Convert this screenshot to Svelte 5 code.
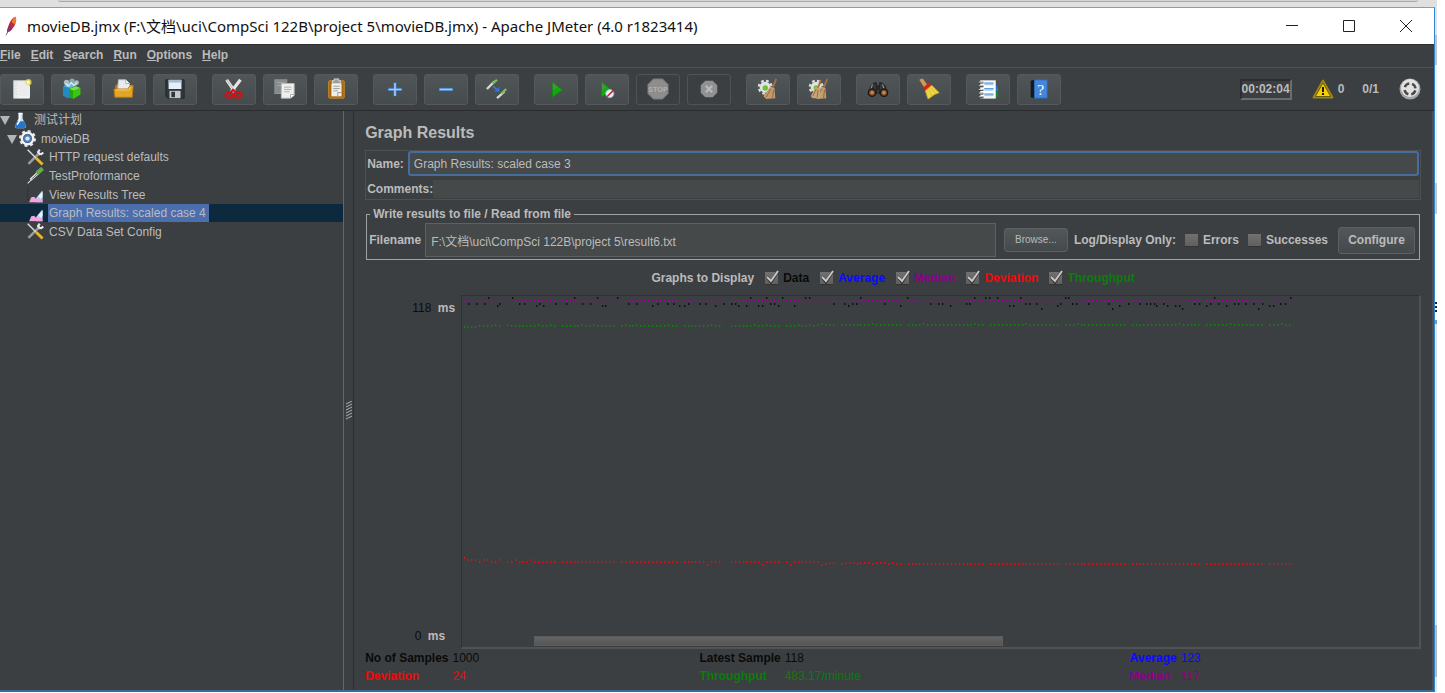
<script>
  const menus = ['File', 'Edit', 'Search', 'Run', 'Options', 'Help'];

  const toolGroups = [
    ['new', 'templates', 'open', 'save'],
    ['cut', 'copy', 'paste'],
    ['expand', 'collapse', 'toggle'],
    ['start', 'startNoPause', 'stop', 'shutdown'],
    ['clear', 'clearAll'],
    ['find', 'resetFind'],
    ['functions', 'help'],
  ];
  const disabledTools = ['stop', 'shutdown'];

  const tree = [
    { label: '测试计划', icon: 'plan', level: 0, open: true },
    { label: 'movieDB', icon: 'gear', level: 1, open: true },
    { label: 'HTTP request defaults', icon: 'config', level: 2 },
    { label: 'TestProformance', icon: 'sampler', level: 2 },
    { label: 'View Results Tree', icon: 'listener', level: 2 },
    { label: 'Graph Results: scaled case 4', icon: 'listener', level: 2, selected: true },
    { label: 'CSV Data Set Config', icon: 'config', level: 2 },
  ];

  const series = [
    { name: 'Data', color: '#0a0a0a' },
    { name: 'Average', color: '#0a0aff' },
    { name: 'Median', color: '#8b008b' },
    { name: 'Deviation', color: '#ee0a0a' },
    { name: 'Throughput', color: '#0a7d0a' },
  ];

  const stats = [
    [['No of Samples', '1000', '#0a0a0a'], ['Deviation', '24', '#ee0a0a']],
    [['Latest Sample', '118', '#0a0a0a'], ['Throughput', '483.17/minute', '#0a7d0a']],
    [['Average', '123', '#0a0aff'], ['Median', '117', '#8b008b']],
  ];

  // Sample points, grouped by the height at which they are plotted
  const data = [
    { y: 1, xs: [25, 49, 111, 134, 154, 287, 303, 319, 342, 346, 397, 444, 511, 522, 526, 534, 557, 602, 605, 751, 827] },
    { y: 7, xs: [5, 13, 21, 36, 56, 61, 76, 92, 103, 119, 127, 165, 173, 194, 204, 210, 225, 236, 242, 260, 268, 272, 307, 311, 370, 381, 389, 393, 421, 467, 475, 479, 503, 506, 562, 566, 573, 597, 609, 613, 625, 645, 665, 676, 683, 687, 691, 700, 731, 736, 747, 755, 771, 775, 782, 790, 799, 817, 822] },
    { y: 9, xs: [34, 73, 80, 139, 142, 189, 216, 221, 252, 275, 283, 295, 299, 315, 331, 385, 437, 487, 546, 550, 594, 656, 693, 704, 712, 716, 743, 763, 806, 810] },
    { y: 12, xs: [578, 649, 719, 795] },
  ];
  const skipped = [10, 24, 39, 55, 66, 67, 81, 95, 112, 133, 152, 169, 188, 204];
  const steps = Array.from({ length: 211 }, (_, i) => i).filter((i) => !skipped.includes(i));
  const xAt = (i) => 2 + Math.floor(i * 3.93);
  const throughputY = (i) => (i < 4 ? 30 : i < 90 ? ((i * 7) % 11 < 2 ? 28 : 29) : (i * 5) % 13 === 0 ? 27 : 28);
  const deviationStart = [263, 265, 265, 265, 267, 265, 265, 267, 267, 265, 267, 267, 267, 265, 267, 267, 267, 265];
  const deviationY = (i) => {
    if (i < deviationStart.length) return deviationStart[i];
    if ([62, 66, 76, 83, 91, 95].includes(i)) return 270;
    return i < 92 ? 267 : i < 110 ? 268 + (i % 4 === 0 ? 1 : 0) : 269;
  };
</script>

{#snippet icon(name)}
  <svg class="icon" viewBox="0 0 24 24" aria-hidden="true">
    {#if name === 'new'}
      <rect x="3" y="3" width="17" height="19" fill="#ececec" stroke="#d0d0d0" />
      <path d="M5.500 5v15" stroke="#bbb" stroke-dasharray="1 2" />
      <path d="M7 21h13V9" fill="none" stroke="#fff" />
      <circle cx="19" cy="4.500" r="3.500" fill="#e9dc54" opacity=".75" /><circle cx="19" cy="4.500" r="1.700" fill="#fffbc0" />
    {:else if name === 'templates'}
      <path d="M1 10l9-3v14l-4 1-5-3z" fill="#238bc4" /><path d="M1 9l9-4 8 2-8 4z" fill="#58bde8" />
      <circle cx="5" cy="5" r="3" fill="#aebdc3" /><circle cx="11" cy="3.500" r="3" fill="#8fa3ab" /><circle cx="16" cy="5" r="2.500" fill="#a8bac2" />
      <path d="M4 6l3 3 3-4 3 3 3-3" fill="none" stroke="#dbe8ec" stroke-width="1.500" />
      <path d="M8 12l7-3 5 2v7l-8 5-4-2z" fill="#27a30c" /><path d="M8 12l7-3 5 2-7 3z" fill="#7be33f" /><path d="M12 14l8-3v7l-8 5z" fill="#39c713" />
    {:else if name === 'open'}
      <path d="M2 9l3-3h4l2 2h8v12H3z" fill="#b87a10" /><path d="M6 2h8l4 4v9H5z" fill="#e9ebee" stroke="#bfc4c9" /><path d="M14 2v4h4" fill="#fff" stroke="#aaa" />
      <path d="M1 12h15l3-4h3l-1 13H2z" fill="#e3a527" stroke="#b77a0b" /><path d="M3 13h14l2-3" fill="none" stroke="#ffd66c" />
    {:else if name === 'save'}
      <path d="M2 2h20v20H4l-2-2z" fill="#30363b" stroke="#20262a" /><rect x="5" y="2" width="14" height="10" fill="#e3f0f9" /><rect x="5" y="2" width="14" height="3" fill="#a5bccd" />
      <rect x="6" y="14" width="12" height="8" fill="#c4c8cb" /><rect x="8" y="15" width="4" height="6" fill="#30363b" />
    {:else if name === 'cut'}
      <path d="M4 2l9 13M19 2L9 15" stroke="#e5e5e5" stroke-width="3.500" /><path d="M4 2l9 13" stroke="#b7b7b7" />
      <ellipse cx="6.500" cy="18.500" rx="3.500" ry="3" fill="none" stroke="#d80f12" stroke-width="2.500" /><ellipse cx="16.500" cy="18.500" rx="3.500" ry="3" fill="none" stroke="#d80f12" stroke-width="2.500" />
      <path d="M8 16l3-3 4 3" fill="none" stroke="#d80f12" stroke-width="2.500" />
    {:else if name === 'copy'}
      <rect x="1" y="2" width="13" height="15" fill="#858a8c" stroke="#969a9c" /><path d="M3 5h9M3 8h6" stroke="#a6a9aa" />
      <path d="M8 6h14v13l-4 3H8z" fill="#eeeeea" stroke="#b9bab6" /><path d="M11 10h8M11 12.500h8M11 15h6" stroke="#aaa" /><path d="M18 22v-4h4" fill="#fff" stroke="#aaa" />
    {:else if name === 'paste'}
      <rect x="4" y="3" width="17" height="19" rx="1" fill="#a86812" stroke="#cf8a22" /><rect x="7" y="6" width="11" height="14" fill="#eeeeea" />
      <path d="M8 3h2V1h5v2h2v3H8z" fill="#9b9e9e" stroke="#dcdddd" /><path d="M9 9h7M9 11.500h7M9 14h5" stroke="#999" /><path d="M14 20v-4h4" fill="#fff" stroke="#888" />
    {:else if name === 'expand'}
      <path d="M12 5v15M4.500 12.500h15" stroke="#3a78bd" stroke-width="3.500" /><path d="M12 5.500v14M5 12.500h14" stroke="#a4c9ef" stroke-width="1.800" />
    {:else if name === 'collapse'}
      <path d="M4.500 12.500h15" stroke="#3a78bd" stroke-width="3.500" /><path d="M5 12.500h14" stroke="#a4c9ef" stroke-width="1.800" />
    {:else if name === 'toggle'}
      <path d="M1 12l8-8" stroke="#d9d9d6" stroke-width="2.500" /><path d="M7 6l5-4" stroke="#7fbd52" stroke-width="2.500" />
      <path d="M12 22l8-7" stroke="#d9d9d6" stroke-width="2.500" /><path d="M17 17l5-5" stroke="#7fbd52" stroke-width="2.500" />
      <path d="M8 9l4 4" stroke="#3880df" stroke-width="1.500" /><path d="M14.500 9.500v5.500H9z" fill="#2876e0" />
    {:else if name === 'start' || name === 'startNoPause'}
      <path d={name === 'start' ? 'M8 4l11 9-11 8z' : 'M6 4l11 9-11 8z'} fill="#12a90f" stroke="#168215" /><path d={name === 'start' ? 'M8.500 5l5 5-5 3z' : 'M6.500 5l5 5-5 3z'} fill="#4f8e4b" />
      {#if name === 'startNoPause'}
        <circle cx="15" cy="17" r="4.500" fill="#e6edf7" stroke="#7db0e0" /><path d="M12 20.500l7-7" stroke="#d0202a" stroke-width="1.600" />
      {/if}
    {:else if name === 'stop'}
      <path d="M7 1h10l6 6v10l-6 6H7l-6-6V7z" fill="#8d8d8d" stroke="#777" />
      <text x="12" y="15" text-anchor="middle" fill="#b0b0b0" font-size="8" font-weight="700">STOP</text>
    {:else if name === 'shutdown'}
      <path d="M8 3h8l5 5v8l-5 5H8l-5-5V8z" fill="#919191" /><path d="M8.500 8.500l7 7M15.500 8.500l-7 7" stroke="#bababa" stroke-width="2.500" />
    {:else if name === 'clear' || name === 'clearAll'}
      <circle cx="9" cy="10" r="6" fill="#e2e3e1" /><circle cx="9" cy="10" r="7" fill="none" stroke="#d9dcda" stroke-width="2.500" stroke-dasharray="3 2.500" />
      <circle cx="9" cy="11" r="3" fill="#69c636" />
      <path d="M21 1l-4 10" stroke="#a27142" stroke-width="2" /><path d="M14 10l5 1 1 11-10 1-3-3z" fill="#c39a6c" /><path d="M15 12l-5 9M18 13l-1 9" stroke="#8f683f" />
      {#if name === 'clearAll'}
        <path d="M14 2l-3 9" stroke="#a27142" stroke-width="2" /><path d="M8 10l5 1 1 11-9 0-2-2z" fill="#c9a478" /><path d="M9 12l-4 8M11 13l-1 8" stroke="#8f683f" />
      {/if}
    {:else if name === 'find'}
      <path d="M7 6l3-1 1 12-9 1 2-9zM17 6l-3-1-1 12 9 1-2-9z" fill="#34373a" stroke="#181b1d" /><path d="M6 7l-3 8M17 7l2 6" stroke="#a7aaad" /><rect x="10" y="8" width="4" height="5" fill="#252729" />
      <circle cx="5.500" cy="16" r="4" fill="#7f4b26" stroke="#191919" stroke-width="1.500" /><circle cx="18.500" cy="16" r="4" fill="#7f4b26" stroke="#191919" stroke-width="1.500" /><circle cx="5.500" cy="16" r="1.800" fill="#d08a50" /><circle cx="18.500" cy="16" r="1.800" fill="#d08a50" />
    {:else if name === 'resetFind'}
      <path d="M2 2l3-1 5 7-3 2z" fill="#d49b4e" stroke="#d49b4e" /><path d="M5 11l7-6 3 3-7 6z" fill="#cf261c" /><path d="M8 14l7-6 8 8-5 2-7 5z" fill="#f1d443" stroke="#c9ac26" /><path d="M12 13l3 7M14 11l5 6" stroke="#d9bd33" />
    {:else if name === 'functions'}
      <path d="M16 8h6l1 6-3 1z" fill="#2577cb" /><path d="M18 15h5v6h-6z" fill="#128923" />
      <rect x="4" y="3" width="16" height="19" fill="#fff" stroke="#ddd" /><path d="M8 5h10v3H8zM8 11h10v3H8zM8 17h10v3H8z" fill="#a8cbf3" /><path d="M8 5.500h10M8 11.500h10M8 17.500h10" stroke="#5c97dc" />
      <path d="M2 5h5M2 9h5M2 13h5M2 17h5M2 21h5" stroke="#252525" stroke-width="2" /><path d="M2 4.500h5M2 8.500h5M2 12.500h5M2 16.500h5M2 20.500h5" stroke="#eee" />
    {:else if name === 'help'}
      <path d="M3 3l4-1v20l-4-1z" fill="#14171b" /><path d="M7 2h14v20H7z" fill="#4386dc" stroke="#2c68b5" /><text x="14" y="18" text-anchor="middle" fill="#fff" font-size="17" font-family="Liberation Serif">?</text>
    {:else if name === 'plan'}
      <path d="M9 2h6v7l5 11q0 3-3 3H7q-3 0-3-3L9 9z" fill="#ccdce9" /><path d="M7 13h10l3 8-3 2H6l-2-3z" fill="#2475cd" /><path d="M9 2h6M11 3v9l-4 6" fill="none" stroke="#fff" stroke-width="2" />
    {:else if name === 'gear'}
      <circle cx="12" cy="12" r="10" fill="none" stroke="#e8e8e8" stroke-width="4" stroke-dasharray="4 3.850" /><circle cx="12" cy="12" r="8" fill="#5b84b8" stroke="#f1f1f1" stroke-width="3.500" /><circle cx="12" cy="12" r="5.500" fill="none" stroke="#3e6ca5" stroke-width="1.500" /><circle cx="12" cy="12" r="3" fill="#dce8f5" />
    {:else if name === 'config'}
      <path d="M2 21L18 5" stroke="#9b9e9c" stroke-width="3.500" /><path d="M15 5l3-4M19 8l4-3M15 4l4 4" stroke="#e8e8e8" stroke-width="3" />
      <path d="M1 1l12 12" stroke="#dcdcdc" stroke-width="2" /><path d="M13 13l9 9" stroke="#eeb719" stroke-width="4" />
    {:else if name === 'sampler'}
      <path d="M1 23l6-6" stroke="#ddd" stroke-width="1.500" /><path d="M5 18L16 8" stroke="#d5d8d4" stroke-width="4" /><path d="M14 9l8-7" stroke="#66a94e" stroke-width="6" /><path d="M7 17l8-8" stroke="#555" />
    {:else if name === 'listener'}
      <path d="M1 2v20" stroke="#222" stroke-dasharray="2 2" /><path d="M13 17l4-5 4-5h1v16h-9z" fill="#b4d3f4" /><path d="M3 23l3-7 4-1 4 4 5-2 3 4v2z" fill="#f2a4e2" /><path d="M16 14l6-6v8l-3 2z" fill="#e8f2ff" />
    {/if}
  </svg>
{/snippet}

{#snippet check(label, color, checked)}
  <label class="check" style:color>
    <span class="box">
      <input type="checkbox" {checked} />
      {#if checked}
        <svg viewBox="0 0 16 16" aria-hidden="true"><path d="M3 7l4 5 7-11" fill="none" stroke="#333" stroke-width="3" /><path d="M3 7l4 4 7-10" fill="none" stroke="#c8c8c8" stroke-width="2" /></svg>
      {/if}
    </span>
    {label}
  </label>
{/snippet}

<div class="desktop">
  <div class="behind"><span></span></div>
  <div class="body">
    <div class="window">
      <header class="titlebar">
        <svg class="feather" viewBox="0 0 16 24" aria-hidden="true">
          <path d="M3 19C4 12 7 4 12 2c3 4-1 12-6 16z" fill="#c8233c" /><path d="M8 8c1-3 2-5 4-6 2 2 1 5 0 8z" fill="#ef7a2b" /><path d="M3 19c0-4 2-7 4-9l1 6z" fill="#8e2365" /><path d="M2 22L9 9" stroke="#7d5287" />
        </svg>
        <h1>movieDB.jmx (F:\文档\uci\CompSci 122B\project 5\movieDB.jmx) - Apache JMeter (4.0 r1823414)</h1>
        <div class="controls">
          <button aria-label="Minimize"><svg viewBox="0 0 14 14"><path d="M1 6.500h12" /></svg></button>
          <button aria-label="Maximize"><svg viewBox="0 0 14 14"><path d="M1.500 1.500h11v11h-11z" /></svg></button>
          <button aria-label="Close"><svg viewBox="0 0 14 14"><path d="M1 1l12 12M13 1L1 13" /></svg></button>
        </div>
      </header>

      <nav class="menubar">
        {#each menus as menu}
          <button><u>{menu[0]}</u>{menu.slice(1)}</button>
        {/each}
      </nav>

      <div class="toolbar">
        {#each toolGroups as group}
          <div class="group">
            {#each group as tool}
              <button class="tool" disabled={disabledTools.includes(tool)} aria-label={tool}>{@render icon(tool)}</button>
            {/each}
          </div>
        {/each}
        <div class="status">
          <output class="timer">00:02:04</output>
          <span class="warn">
            <svg viewBox="0 0 22 20" aria-hidden="true"><path d="M11 1.500L20.500 18.500h-19z" fill="#3b3300" stroke="#9a8515" stroke-width="2" stroke-linejoin="round" /><path d="M11 4.500l7 12.500H4z" fill="#f5cf08" /><path d="M10 8h2v5h-2zM10 14h2v2h-2z" fill="#1c1800" /></svg>
            0
          </span>
          <span class="threads">0/1</span>
          <svg class="remote" viewBox="0 0 22 22" aria-hidden="true"><circle cx="11" cy="11" r="10.500" fill="#a5a5a5" /><circle cx="11" cy="10" r="9" fill="#e2e2e2" /><circle cx="11" cy="11" r="5.500" fill="none" stroke="#4a4a4a" stroke-width="2.500" stroke-dasharray="5.640 3" stroke-dashoffset="-1.500" /></svg>
        </div>
      </div>

      <main>
        <aside>
          <ul class="tree">
            {#each tree as node}
              <li class="l{node.level}" class:selected={node.selected}>
                {#if node.open}<svg class="arrow" viewBox="0 0 10 10" aria-hidden="true"><path d="M0 1h10L5 10z" fill="#b4b4b4" /></svg>{/if}
                {@render icon(node.icon)}
                <span>{node.label}</span>
              </li>
            {/each}
          </ul>
        </aside>
        <div class="splitter">
          <svg viewBox="0 0 6 20" aria-hidden="true"><path d="M0 3l6-3M0 6l6-3M0 9l6-3M0 12l6-3M0 15l6-3M0 18l6-3" stroke="#b0b0b0" /></svg>
        </div>

        <section class="panel">
          <h2>Graph Results</h2>
          <div class="naming">
            <div class="field name">
              <label for="name">Name:</label>
              <input id="name" type="text" value="Graph Results: scaled case 3" />
            </div>
            <div class="field comments">
              <label for="comments">Comments:</label>
              <input id="comments" type="text" />
            </div>
          </div>

          <fieldset>
            <legend>Write results to file / Read from file</legend>
            <div class="file">
              <label for="filename">Filename</label>
              <input id="filename" type="text" value="F:\文档\uci\CompSci 122B\project 5\result6.txt" />
              <button class="browse">Browse...</button>
              <span class="only">Log/Display Only:</span>
              {@render check('Errors', '#bbbbbb', false)}
              {@render check('Successes', '#bbbbbb', false)}
              <button class="configure">Configure</button>
            </div>
          </fieldset>

          <div class="graphs">
            <span>Graphs to Display</span>
            {#each series as s}
              {@render check(s.name, s.color, true)}
            {/each}
          </div>

          <div class="chart">
            <div class="axis">
              <div><i>118</i> ms</div>
              <div class="low"><i>0</i> ms</div>
            </div>
            <div class="plot">
              <svg width="100%" height="100%" role="img" aria-label="Graph Results">
                {#each steps as i}
                  <rect x={xAt(i)} y="4" width="1.400" height="2" fill="#97069a" />
                  <rect x={xAt(i)} y={throughputY(i)} width="1.400" height="2" fill="#0b820b" />
                  <rect x={xAt(i)} y={deviationY(i) - 2} width="1.400" height="2" fill="#dc1010" />
                {/each}
                {#each data as row}
                  {#each row.xs as x}
                    <rect x={x + 1} y={row.y} width="1.400" height="2" fill="#101010" />
                  {/each}
                {/each}
              </svg>
              <div class="scroll"><span></span></div>
            </div>
          </div>

          <div class="stats">
            {#each stats as column}
              <dl>
                {#each column as [name, value, color]}
                  <dt style:color>{name}</dt>
                  <dd style:color>{value}</dd>
                {/each}
              </dl>
            {/each}
          </div>
        </section>
      </main>
    </div>
    <div class="edge"></div>
  </div>
</div>

<style>
  :global(body) { margin: 0; background: #fff; }
  * { box-sizing: border-box; }
  button, input { font: inherit; color: inherit; margin: 0; }
  .desktop {
    display: flex; flex-direction: column; height: 100vh; padding: 0 8px 1px 0;
    font: 12px/18px "Liberation Sans", "Noto Sans CJK SC", sans-serif; color: #bbb;
  }
  .behind { flex: none; height: 7px; background: #e0e0e0; padding: 0 19px 0 58px; }
  .behind span { display: block; height: 2px; background: #d4d4d4; border-bottom: 1px solid #aaa; border-radius: 0 0 3px 3px; }
  .body { flex: 1; min-height: 0; display: flex; }
  .edge {
    flex: none; width: 2px;
    background: linear-gradient(#e4e4e4 28px, #bfc3c7 28px 58px, #eee 58px 176px, #c8c8c8 176px 207px, #fff 207px 295px, #222 295px 297px, #fff 297px 299px, #222 299px 301px, #fff 301px 303px, #222 303px 305px, #fff 305px 313px, #5aa0d8 313px 317px, #e3e6e8 317px 618px, #b8b8b8 618px 670px, #e6e6e6 670px);
  }
  .window {
    flex: 1; min-width: 0; display: flex; flex-direction: column; background: #3c3f41;
    border: solid #2f86d0; border-width: 1px 1px 2px 0; border-top-color: #68a6d8; border-bottom-color: #3b6a96;
  }

  .titlebar { flex: none; height: 36px; display: flex; align-items: center; background: #fff; color: #111; padding-left: 4px; }
  .feather { width: 15px; height: 22px; }
  h1 { flex: 1; margin: 0 0 0 8px; font: 15px/24px "Noto Sans", "Noto Sans CJK SC", sans-serif; white-space: nowrap; }
  .controls { display: flex; }
  .controls button { width: 57px; height: 36px; padding: 0; border: 0; background: none; }
  .controls svg { display: block; width: 14px; height: 14px; margin: auto; fill: none; stroke: #222; }

  .menubar { flex: none; height: 24px; display: flex; gap: 10px; padding-bottom: 2px; border-top: 1px solid #2c2e30; border-bottom: 1px solid #515353; font-weight: 700; }
  .menubar button { padding: 0; border: 0; background: none; line-height: 20px; }

  .toolbar { flex: none; height: 43px; display: flex; align-items: center; gap: 15px; border-bottom: 1px solid #292b2d; }
  .group { display: flex; gap: 7px; }
  .tool {
    width: 44px; height: 31px; padding: 0; display: grid; place-items: center;
    border: 1px solid #55595b; border-radius: 3px; background: linear-gradient(#505557, #464b4d);
  }
  .tool:disabled { background: none; border-color: #505355; }
  .icon { display: block; width: 22px; height: 22px; fill: none; }
  .status { margin-left: auto; display: flex; align-items: center; padding-right: 13px; font-weight: 700; }
  .timer { border: 2px solid; border-color: #2c2e30 #696d6f #696d6f #2c2e30; line-height: 17px; }
  .warn { display: flex; align-items: center; gap: 4px; margin-left: 20px; }
  .warn svg { width: 22px; height: 20px; }
  .threads { margin-left: 18px; }
  .remote { width: 22px; height: 22px; margin-left: 20px; }

  main { flex: 1; min-height: 0; display: flex; }
  aside { flex: none; width: 24%; border-right: 1px solid #65686a; }
  .tree { list-style: none; margin: 0; padding: 0; height: 130px; display: grid; grid-auto-rows: 1fr; }
  .tree li { display: flex; align-items: center; }
  .tree .icon { width: 17px; height: 17px; margin-right: 4px; flex: none; }
  .tree span { padding: 0 3px 0 1px; line-height: 18px; white-space: nowrap; }
  .arrow { width: 10px; height: 10px; margin-right: 2px; }
  .l1 { padding-left: 7px; }
  .l2 { padding-left: 27px; }
  .selected { background: #0d293e; }
  .selected span { background: #4b6eaf; }
  .splitter { flex: none; width: 10px; display: grid; place-items: center; padding-top: 20px; border-right: 1px solid #2b2d2f; }
  .splitter svg { width: 6px; height: 20px; }

  .panel { flex: 1; min-width: 0; display: flex; flex-direction: column; padding: 11px 11px 5px; border-right: 2px solid #4d5052; }
  h2 { margin: 0 0 6px; font-size: 16px; line-height: 22px; }
  .naming { border: 1px solid #4d5153; padding: 0 1px 1px; display: grid; gap: 4px; }
  .field { display: flex; align-items: center; }
  .field label { font-weight: 700; }
  input[type='text'] { flex: 1; min-width: 0; background: #45494a; border: 1px solid #5d6162; outline: none; }
  #name { height: 25px; margin-left: 4px; border: 2px solid #466d9c; border-radius: 3px; padding: 0 4px; }
  #comments { height: 18px; border: 0; padding: 0; }

  fieldset { min-width: 0; margin: 5px 1px 0; padding: 0 4px 2px 2px; border: 1px solid #a0a3a4; }
  legend { font-weight: 700; padding: 0 3px; margin-left: 1px; line-height: 18px; }
  .file { display: flex; align-items: center; font-weight: 700; }
  #filename { height: 34px; margin-left: 4px; padding: 0 5px; font-weight: 400; }
  .browse, .configure { border: 1px solid #5b6062; border-radius: 3px; background: linear-gradient(#52585a, #44494b); padding: 0; }
  .browse { width: 64px; height: 24px; margin: 0 6px 0 8px; font-size: 10px; font-weight: 400; }
  .configure { width: 77px; height: 27px; margin-left: 10px; }
  .check { display: flex; align-items: center; gap: 5px; font-weight: 700; }
  .box { position: relative; width: 13px; height: 13px; }
  .box input { display: block; appearance: none; width: 13px; height: 13px; background: linear-gradient(#707070, #606060); border-bottom: 1px solid #333; }
  .box svg { position: absolute; left: -1px; top: -2px; width: 16px; height: 16px; }
  .file .check { margin-left: 9px; }

  .graphs { display: flex; justify-content: center; gap: 11px; margin-top: 9px; font-weight: 700; }

  .chart { flex: 1; min-height: 0; display: flex; margin-top: 8px; }
  .axis { flex: none; width: 96px; padding: 4px 6px 4px 0; display: flex; flex-direction: column; justify-content: space-between; text-align: right; font-weight: 700; }
  .axis i { font-style: normal; font-weight: 400; color: #0c0c0c; margin-right: 3px; }
  .low { padding-right: 10px; }
  .plot { flex: 1; min-width: 0; display: flex; flex-direction: column; border: 1px solid #2f3133; border-right: 2px solid #505355; border-bottom: 2px solid #505355; }
  .plot > svg { display: block; flex: 1; min-height: 0; }
  .scroll { flex: none; height: 11px; padding: 0 0 1px 72px; }
  .scroll span { display: block; width: 53%; height: 10px; background: linear-gradient(#656565, #555); border: 1px solid #5c5c5c; }

  .stats { display: grid; grid-template-columns: 334fr 430fr 291fr; }
  dl { margin: 0; display: grid; grid-template-columns: max-content 1fr; column-gap: 4px; }
  dt { font-weight: 700; }
  dd { margin: 0; }
</style>
